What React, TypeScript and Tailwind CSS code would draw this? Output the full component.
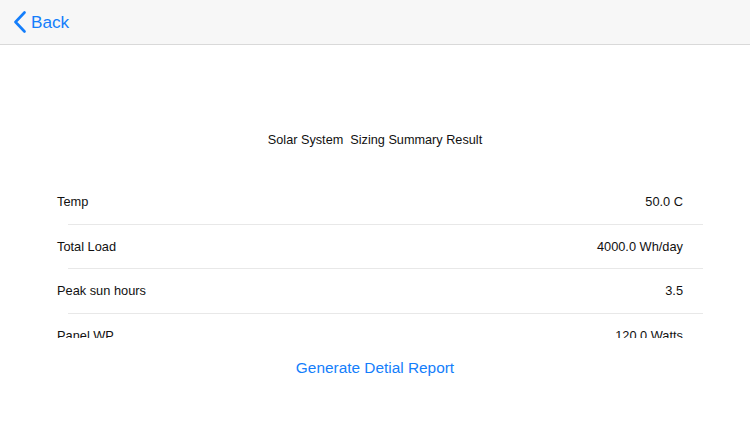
import React from "react";

const rows = [
  { label: "Temp", value: "50.0 C" },
  { label: "Total Load", value: "4000.0 Wh/day" },
  { label: "Peak sun hours", value: "3.5" },
  { label: "Panel WP", value: "120.0 Watts" },
  { label: "Number of panels", value: "10" },
];

export default function App() {
  return (
    <div
      className="w-[750px] h-[422px] bg-white flex flex-col overflow-hidden"
      style={{ fontFamily: '"Liberation Sans", Arial, sans-serif' }}
    >
      <div className="h-[45px] shrink-0 bg-[#f7f7f7] border-b border-[#d9d9d9] flex items-center pl-[13px]">
        <svg width="14" height="22" viewBox="0 0 14 22" className="mr-[4px]">
          <path
            d="M11.5 1.5 L2.5 11 L11.5 20.5"
            fill="none"
            stroke="#147efb"
            strokeWidth="2.6"
            strokeLinecap="round"
            strokeLinejoin="round"
          />
        </svg>
        <span className="text-[17.2px] text-[#147efb] leading-none mt-[1px]">Back</span>
      </div>

      <div className="h-[40px] mt-[75px] shrink-0 flex items-center justify-center">
        <span className="text-[12.7px] text-[#111] leading-none">
          Solar System&nbsp; Sizing Summary Result
        </span>
      </div>

      <div className="h-[158px] shrink-0 mt-[20px] overflow-hidden pl-[57px]">
        {rows.map((r) => (
          <div key={r.label} className="h-[44.5px] flex flex-col">
            <div className="flex-1 flex items-center justify-between pr-[67px]">
              <span className="text-[12.8px] text-[#111]">{r.label}</span>
              <span className="text-[12.8px] text-[#111]">{r.value}</span>
            </div>
            <div className="h-px bg-[#e8e8e8] ml-[11px] mr-[47px]" />
          </div>
        ))}
      </div>

      <div className="h-[20px] mt-[20px] flex items-center justify-center">
        <span className="text-[15.4px] text-[#147efb] leading-none">Generate Detial Report</span>
      </div>
    </div>
  );
}
